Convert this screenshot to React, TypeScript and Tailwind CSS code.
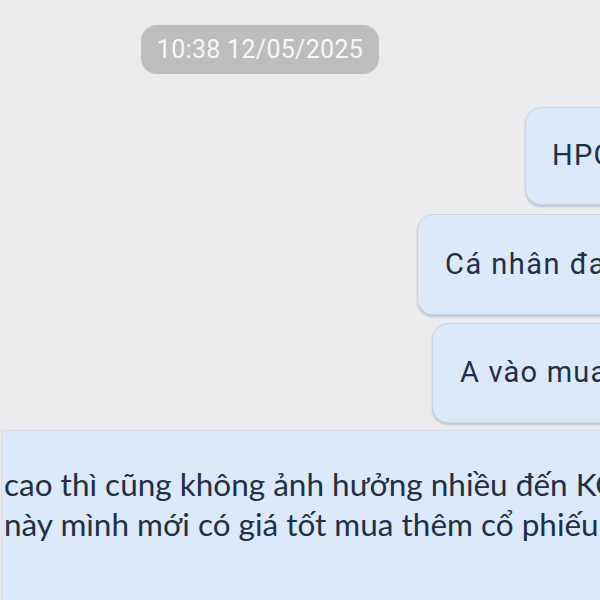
import React from "react";

const bubble =
  "flex items-center whitespace-nowrap overflow-hidden bg-[#dbe9fb] border border-[#c9d5e3] rounded-[16px] shadow-[0_2px_2px_rgba(120,130,150,0.35)] text-[#223044]";

export default function App() {
  return (
    <div className="w-[600px] h-[600px] overflow-hidden bg-[#ececee] flex flex-col pt-[25px]">
      <div className="ml-[141px] w-[238px] h-[49px] shrink-0 rounded-[16px] bg-[#bdbdbd] flex items-center justify-center text-[25px] tracking-[0.3px] text-[#f7f7f7] font-['Roboto',sans-serif]">
        10:38 12/05/2025
      </div>
      <div className={`${bubble} ml-[525px] mt-[33px] h-[98px] w-[200px] shrink-0 pl-[26px] text-[29px] tracking-[1.2px] font-['Roboto',sans-serif]`}>
        HPG
      </div>
      <div className={`${bubble} ml-[417px] mt-[9px] h-[101px] w-[300px] shrink-0 pl-[27px] text-[29px] tracking-[1.5px] font-['Roboto',sans-serif]`}>
        Cá nhân đang
      </div>
      <div className={`${bubble} ml-[432px] mt-[8px] h-[100px] w-[300px] shrink-0 pl-[27px] text-[29px] tracking-[1.2px] font-['Roboto',sans-serif]`}>
        A vào mua
      </div>
      <div className="ml-[1px] mt-[7px] w-[800px] h-[200px] shrink-0 bg-[#dbe9fb] border border-[#d3deea] rounded-tl-[3px] rounded-tr-[16px] pt-[33px] pl-[2px] text-[31.5px] leading-[40px] text-[#223044] whitespace-nowrap font-['Lato',sans-serif]">
        <div>cao thì cũng không ảnh hưởng nhiều đến KQ</div>
        <div>này mình mới có giá tốt mua thêm cổ phiếu</div>
      </div>
    </div>
  );
}
